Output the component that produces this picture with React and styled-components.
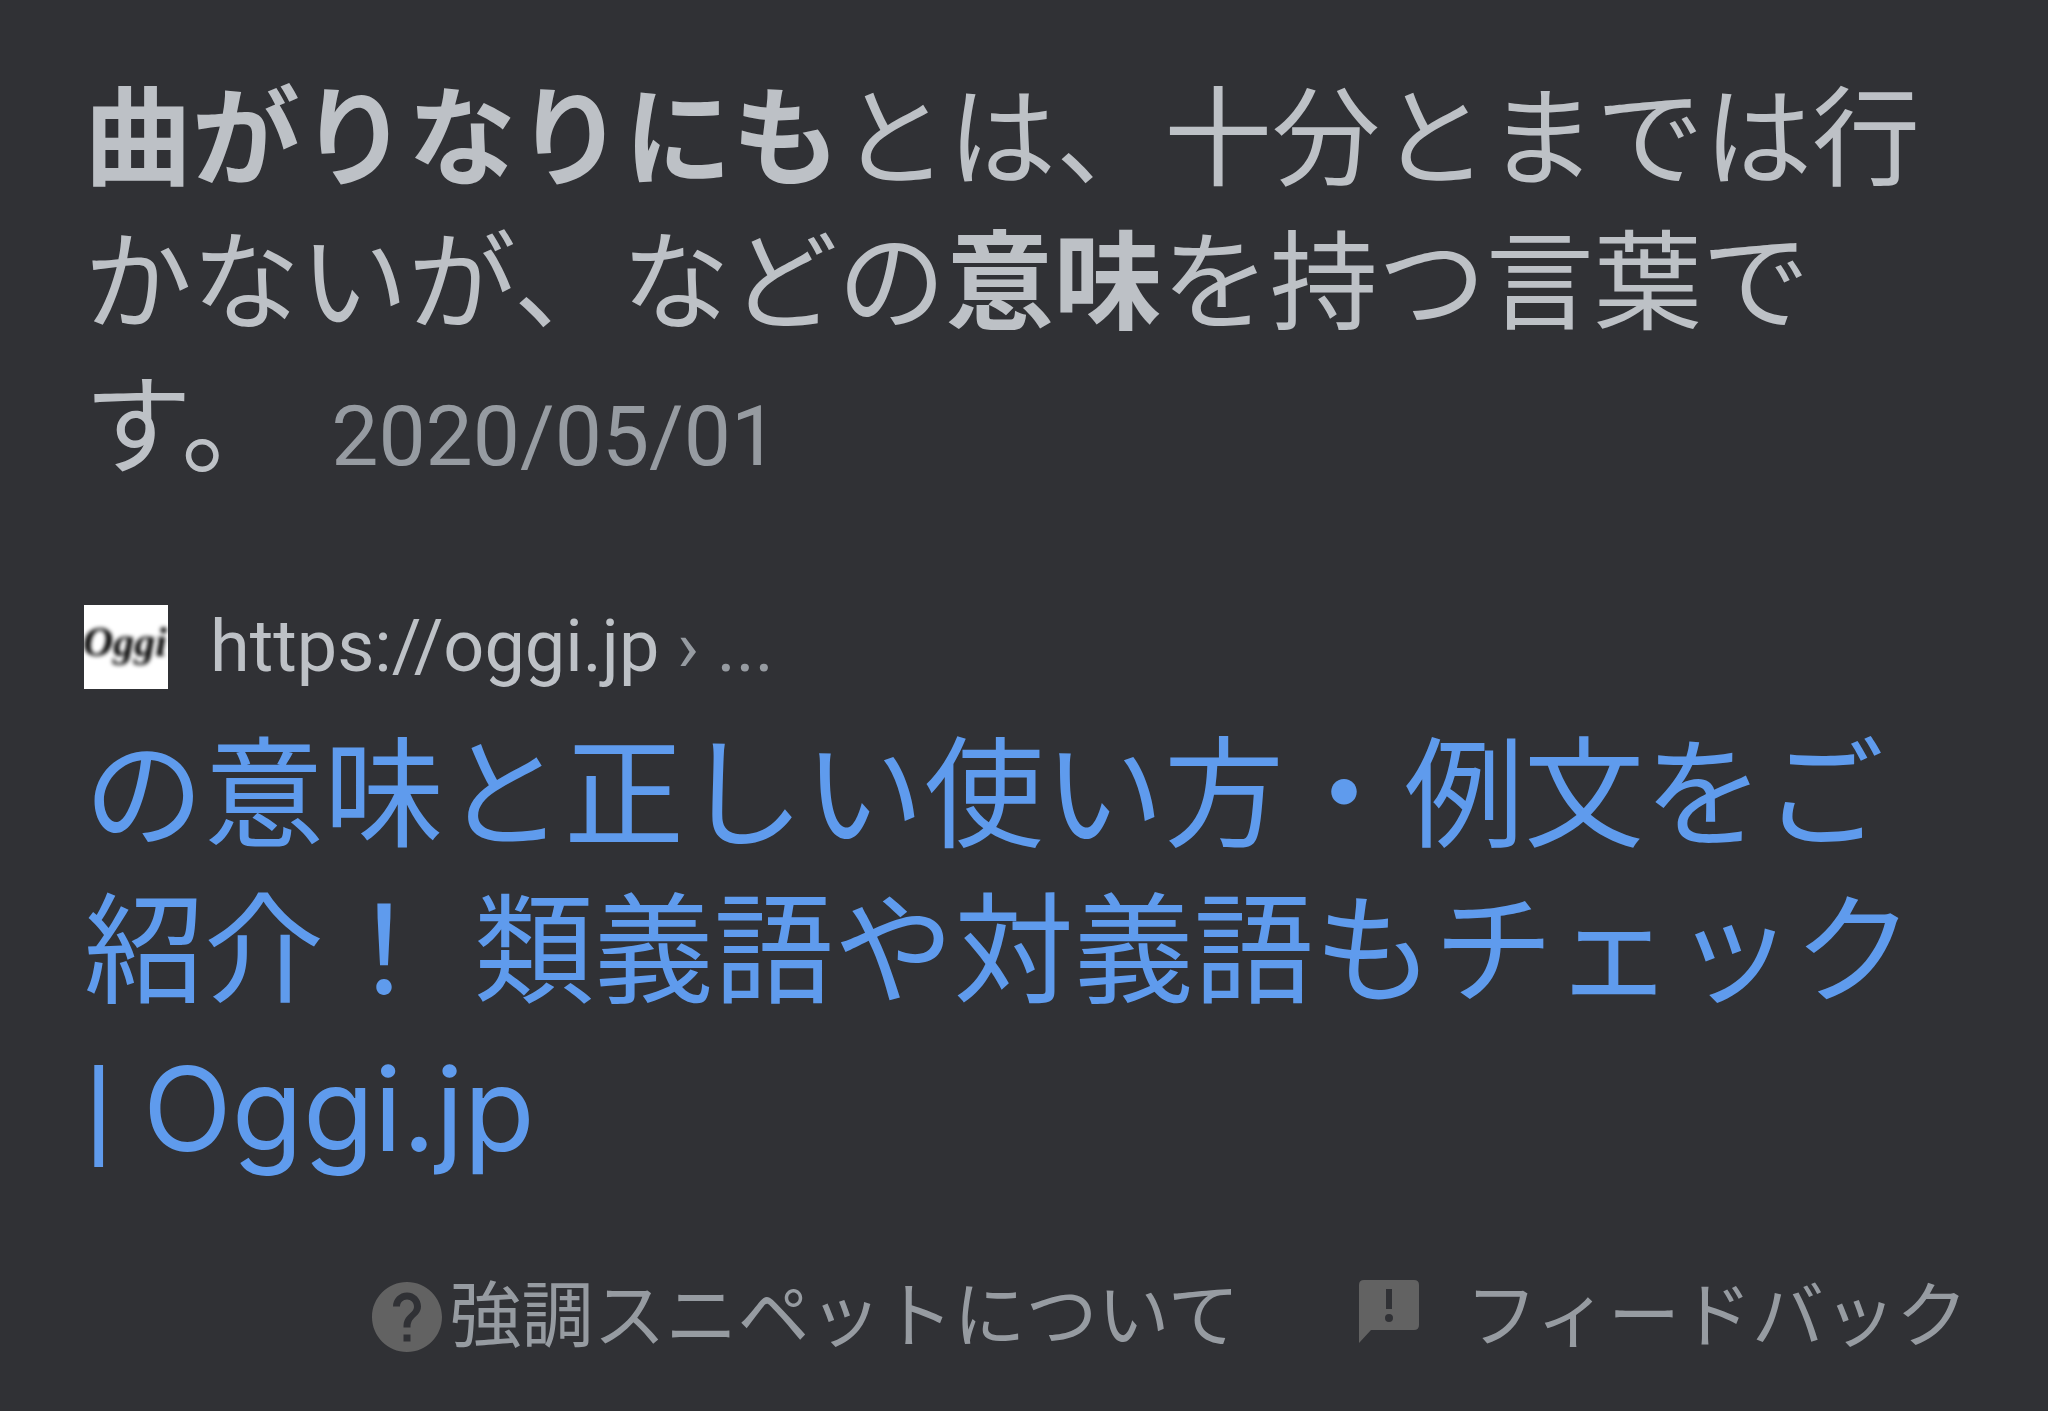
import React from 'react';
import styled, { createGlobalStyle } from 'styled-components';


const GlobalStyle = createGlobalStyle`
    body{
        margin: 0;
        background: #303135;
        color: #bdc1c6;
        font-family: Roboto, "Noto Sans CJK JP", sans-serif;
    }
`;

/* Styled Components */
const Card = styled.article`
    padding: 68px 80px 0 84px;
`;

const Answer = styled.p`
    margin: 0;
    font-size: 108px;
    line-height: 144px;

    b{
        font-weight: 700;
    }
`;

const AnswerDate = styled.time`
    margin-left: 42px;
    font-size: 84px;
    color: #969ba1;
`;

const Source = styled.div`
    display: flex;
    align-items: center;
    gap: 42px;
    margin-top: 92px;
    font-size: 72px;
    line-height: 92px;
`;

const Favicon = styled.svg`
    width: 84px;
    height: 84px;
    background: #fff;
`;

const Crumb = styled.span`
    color: #969ba1;
`;

const Title = styled.h3`
    margin: 26px 0 0;
    font-size: 120px;
    font-weight: 400;
    line-height: 156px;

    a{
        color: #5f9bed;
        text-decoration: none;
    }
`;

const SiteName = styled.span`
    font-family: Inter, sans-serif;
    font-size: 116px;
`;

const Footer = styled.footer`
    display: flex;
    justify-content: flex-end;
    gap: 120px;
    margin-top: 74px;
    font-size: 72px;
    line-height: 110px;
`;

const FooterLink = styled.a`
    display: flex;
    align-items: center;
    gap: ${({ $gap }) => $gap}px;
    color: #969ba1;
    text-decoration: none;

    svg{
        fill: #626262;
    }
`;

const OggiIcon = () => (
    <Favicon viewBox="0 0 84 84" role="img" aria-label="Oggi">
        <filter id="soft">
            <feGaussianBlur stdDeviation="2" />
        </filter>
        <text x="41" y="51" textAnchor="middle" fontFamily="Liberation Serif, serif" fontStyle="italic" fontWeight="700" fontSize="42" filter="url(#soft)">Oggi</text>
    </Favicon>
);

const HelpIcon = () => (
    <svg viewBox="2 2 20 20" width="70" height="70" aria-hidden="true">
        <path d="M12 2C6.48 2 2 6.48 2 12s4.48 10 10 10 10-4.48 10-10S17.52 2 12 2zm1 17h-2v-2h2v2zm2.07-7.75l-.9.92C13.45 12.9 13 13.5 13 15h-2v-.5c0-1.1.45-2.1 1.17-2.83l1.24-1.26c.37-.36.59-.86.59-1.41 0-1.1-.9-2-2-2s-2 .9-2 2H8c0-2.21 1.79-4 4-4s4 1.79 4 4c0 .88-.36 1.68-.93 2.25z" />
    </svg>
);

const FeedbackIcon = () => (
    <svg viewBox="0 0 60 74" width="60" height="74" aria-hidden="true">
        <path fillRule="evenodd" d="M5 0H55Q60 0 60 5V45Q60 50 55 50H12L0 63V5Q0 0 5 0ZM27 9V29H33V9Z M30 34A4 4 0 1 0 30 42A4 4 0 1 0 30 34Z" />
    </svg>
);


export default function App() {
    return (
        <Card lang="ja">
            <GlobalStyle />
            <Answer>
                <b>曲がりなりにも</b>とは、十分とまでは行かないが、などの<b>意味</b>を持つ言葉です。
                <AnswerDate dateTime="2020-05-01">2020/05/01</AnswerDate>
            </Answer>
            <Source>
                <OggiIcon />
                <span>https://oggi.jp<Crumb> › ...</Crumb></span>
            </Source>
            <Title>
                <a href="#article">の意味と正しい使い方・例文をご紹介！ 類義語や対義語もチェック | <SiteName>Oggi.jp</SiteName></a>
            </Title>
            <Footer>
                <FooterLink href="#about" $gap={8}>
                    <HelpIcon />
                    強調スニペットについて
                </FooterLink>
                <FooterLink href="#feedback" $gap={46}>
                    <FeedbackIcon />
                    フィードバック
                </FooterLink>
            </Footer>
        </Card>
    )
}
